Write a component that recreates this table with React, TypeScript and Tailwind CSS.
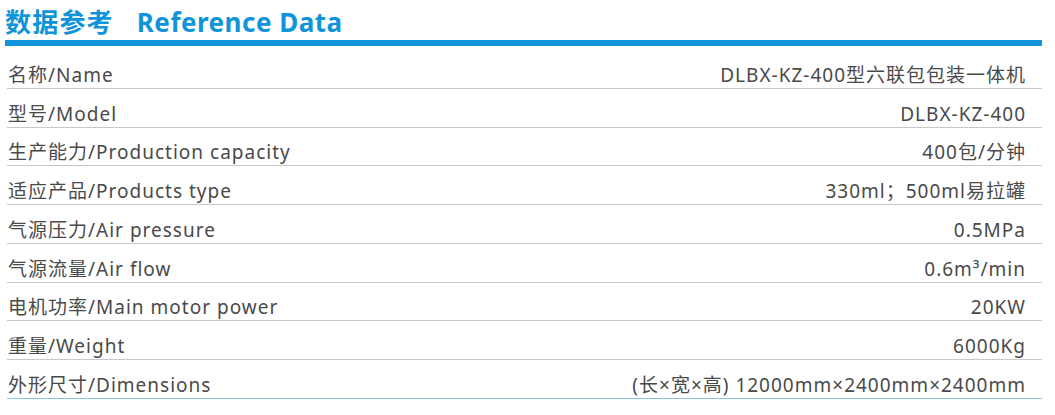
const rows: [string, string][] = [
  ["名称/Name", "DLBX-KZ-400型六联包包装一体机"],
  ["型号/Model", "DLBX-KZ-400"],
  ["生产能力/Production capacity", "400包/分钟"],
  ["适应产品/Products type", "330ml；500ml易拉罐"],
  ["气源压力/Air pressure", "0.5MPa"],
  ["气源流量/Air flow", "0.6m³/min"],
  ["电机功率/Main motor power", "20KW"],
  ["重量/Weight", "6000Kg"],
  ["外形尺寸/Dimensions", "(长×宽×高) 12000mm×2400mm×2400mm"],
];

export default function App() {
  return (
    <div className="w-[1055px] h-[415px] bg-white pl-[5px] pt-[4px] font-['Noto_Sans','Noto_Sans_CJK_SC',sans-serif]">
      <div className="w-[1037px]">
        <div className="flex items-center h-[36px] gap-[23px] font-bold text-[#0f94da] text-[26px] leading-none">
          <span className="tracking-[1.2px]">数据参考</span>
          <span className="tracking-[0.5px]">Reference Data</span>
        </div>
        <div className="h-[6px] bg-[#0f94da]" />
        <div className="pl-[2px] pt-[4px]">
          {rows.map(([k, v], i) => (
            <div
              key={k}
              className={`flex items-end justify-between h-[38.75px] border-b pl-[1px] pr-[16px] pb-[3px] text-[19px] tracking-[1px] leading-none text-[#4a4a4a] ${
                i === rows.length - 1 ? "border-[#8cc4e6]" : "border-[#c8c8c8]"
              }`}
            >
              <span>{k}</span>
              <span>{v}</span>
            </div>
          ))}
        </div>
      </div>
    </div>
  );
}
